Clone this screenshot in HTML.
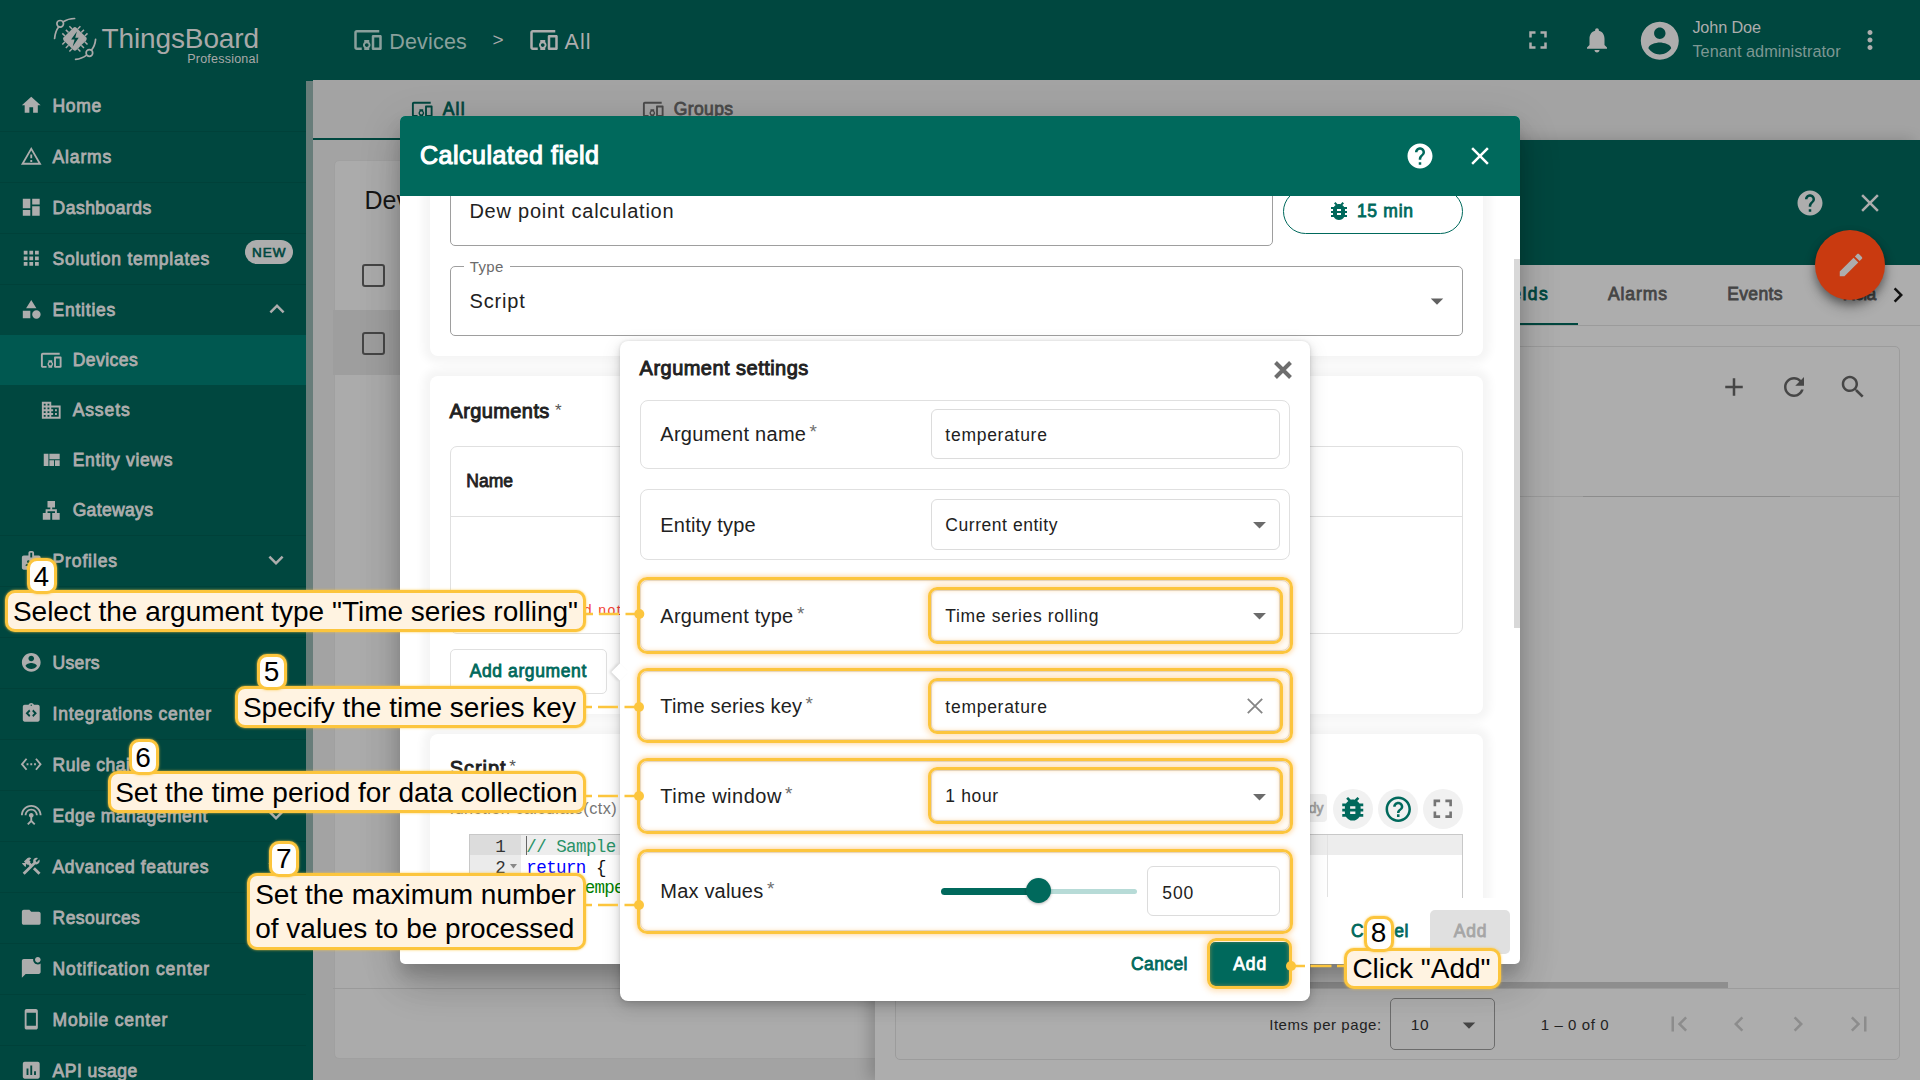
<!DOCTYPE html>
<html><head><meta charset="utf-8"><title>ThingsBoard</title><style>
html,body{margin:0;padding:0}
body{width:1920px;height:1080px;overflow:hidden;position:relative;background:#a3a3a3;font-family:"Liberation Sans",sans-serif}
div,span,svg{position:absolute;box-sizing:border-box}
span{white-space:pre}
</style></head><body>
<div style="left:0px;top:0px;width:1920px;height:80px;background:#00473f"></div>
<svg style="left:52px;top:14px" width="48" height="50" viewBox="0 0 48 50"><g fill="none" stroke="#a9a9a9" stroke-width="1.7" stroke-linecap="round">
<path d="M2.6 24.5 C3 19.5 4.6 15.5 6.6 12.9"/><path d="M11.2 7.7 C14.5 5.6 18.5 4.6 22.6 4.5"/><circle cx="8.2" cy="9.8" r="3.3"/>
<path d="M43.6 25.4 C43.2 30 41.6 33.600 39.400 36.200"/><path d="M34.600 41.200 C31.500 43.600 27.500 45.200 23.600 45.400"/><circle cx="37.4" cy="39" r="3.3"/>
</g><g transform="translate(22.9 24.900) rotate(45)"><rect x="-9" y="-9" width="18" height="18" rx="2.2" fill="#a9a9a9"/>
<g stroke="#a9a9a9" stroke-width="1.5" stroke-linecap="butt"><path d="M-5 -9v-3.800M0 -9v-3.800M5 -9v-3.800M-5 9v3.800M0 9v3.800M5 9v3.800M-9 -5h-3.800M-9 0h-3.800M-9 5h-3.800M9 -5h3.800M9 0h3.800M9 5h3.800"/></g>
<path d="M2 -7.500 L-3.800 0.700 L-0.300 0.700 L-2.200 7.500 L3.800 -1.100 L0.300 -1.100 Z" fill="#00473f" transform="rotate(-45)"/></g></svg>
<span style="left:101.44px;top:24.6px;font-size:28px;line-height:28px;color:#a9a9a9;letter-spacing:-0.11px;">ThingsBoard</span>
<span style="left:187.25px;top:52.8px;font-size:12.5px;line-height:12.5px;color:#a9a9a9;letter-spacing:0.22px;">Professional</span>
<svg style="left:352.5px;top:25.0px;" width="30" height="30" viewBox="0 0 24 24"><path fill="#8aa09c" d="M3 6h18V4H3c-1.1 0-2 .9-2 2v12c0 1.1.9 2 2 2h4v-2H3V6zm10 6H9v1.78c-.61.55-1 1.33-1 2.22s.39 1.67 1 2.22V20h4v-1.78c.61-.55 1-1.34 1-2.22s-.39-1.67-1-2.22V12zm-2 5.5c-.83 0-1.5-.67-1.5-1.5s.67-1.5 1.5-1.5 1.5.67 1.5 1.5-.67 1.5-1.5 1.5zM22 8h-6c-.5 0-1 .5-1 1v10c0 .5.5 1 1 1h6c.5 0 1-.5 1-1V9c0-.5-.5-1-1-1zm-1 10h-4v-8h4v8z"/></svg>
<span style="left:389.17px;top:32.4px;font-size:21.5px;line-height:21.5px;color:#8aa09c;letter-spacing:0.20px;">Devices</span>
<span style="left:492.62px;top:30.2px;font-size:19px;line-height:19px;color:#a9a9a9;">&gt;</span>
<svg style="left:529.0px;top:25.0px;" width="30" height="30" viewBox="0 0 24 24"><path fill="#adadad" d="M3 6h18V4H3c-1.1 0-2 .9-2 2v12c0 1.1.9 2 2 2h4v-2H3V6zm10 6H9v1.78c-.61.55-1 1.33-1 2.22s.39 1.67 1 2.22V20h4v-1.78c.61-.55 1-1.34 1-2.22s-.39-1.67-1-2.22V12zm-2 5.5c-.83 0-1.5-.67-1.5-1.5s.67-1.5 1.5-1.5 1.5.67 1.5 1.5-.67 1.5-1.5 1.5zM22 8h-6c-.5 0-1 .5-1 1v10c0 .5.5 1 1 1h6c.5 0 1-.5 1-1V9c0-.5-.5-1-1-1zm-1 10h-4v-8h4v8z"/></svg>
<span style="left:564.57px;top:32.4px;font-size:21.5px;line-height:21.5px;color:#adadad;letter-spacing:1.04px;">All</span>
<svg style="left:1522.5px;top:25.0px;" width="30" height="30" viewBox="0 0 24 24"><path fill="#adadad" d="M7 14H5v5h5v-2H7v-3zm-2-4h2V7h3V5H5v5zm12 7h-3v2h5v-5h-2v3zM14 5v2h3v3h2V5h-5z"/></svg>
<svg style="left:1582.0px;top:25.0px;" width="30" height="30" viewBox="0 0 24 24"><path fill="#adadad" d="M12 22c1.100 0 2-.9 2-2h-4c0 1.100.89 2 2 2zm6-6v-5c0-3.070-1.640-5.640-4.500-6.320V4c0-.83-.67-1.500-1.500-1.500s-1.500.67-1.500 1.500v.68C7.630 5.360 6 7.920 6 11v5l-2 2v1h16v-1l-2-2z"/></svg>
<svg style="left:1637.2px;top:17.7px;" width="45.6" height="45.6" viewBox="0 0 24 24"><path fill="#adadad" d="M12 2C6.48 2 2 6.48 2 12s4.48 10 10 10 10-4.48 10-10S17.52 2 12 2zm0 3c1.66 0 3 1.34 3 3s-1.34 3-3 3-3-1.34-3-3 1.34-3 3-3zm0 14.2c-2.5 0-4.71-1.28-6-3.22.03-1.99 4-3.08 6-3.08 1.99 0 5.97 1.09 6 3.08-1.29 1.94-3.5 3.22-6 3.22z"/></svg>
<span style="left:1692.375px;top:18.7px;font-size:16.25px;line-height:16.25px;color:#adadad;letter-spacing:-0.14px;">John Doe</span>
<span style="left:1692.375px;top:43.1px;font-size:16.25px;line-height:16.25px;color:#7d9793;letter-spacing:0.05px;">Tenant administrator</span>
<svg style="left:1855.0px;top:25.0px;" width="30" height="30" viewBox="0 0 24 24"><path fill="#adadad" d="M12 8c1.100 0 2-.9 2-2s-.9-2-2-2-2 .9-2 2 .9 2 2 2zm0 2c-1.100 0-2 .9-2 2s.9 2 2 2 2-.9 2-2-.9-2-2-2zm0 6c-1.100 0-2 .9-2 2s.9 2 2 2 2-.9 2-2-.9-2-2-2z"/></svg>
<div style="left:0px;top:80px;width:313px;height:1000px;background:#00473f"></div>
<div style="left:306px;top:81px;width:7px;height:825px;background:#687d7a"></div>
<div style="left:0px;top:335px;width:306px;height:50px;background:#005850"></div>
<div style="left:0px;top:131px;width:306px;height:1px;background:#004139"></div>
<div style="left:0px;top:182px;width:306px;height:1px;background:#004139"></div>
<div style="left:0px;top:233px;width:306px;height:1px;background:#004139"></div>
<div style="left:0px;top:284px;width:306px;height:1px;background:#004139"></div>
<div style="left:0px;top:535px;width:306px;height:1px;background:#004139"></div>
<div style="left:0px;top:586px;width:306px;height:1px;background:#004139"></div>
<div style="left:0px;top:637px;width:306px;height:1px;background:#004139"></div>
<div style="left:0px;top:688px;width:306px;height:1px;background:#004139"></div>
<div style="left:0px;top:739px;width:306px;height:1px;background:#004139"></div>
<div style="left:0px;top:790px;width:306px;height:1px;background:#004139"></div>
<div style="left:0px;top:841px;width:306px;height:1px;background:#004139"></div>
<div style="left:0px;top:892px;width:306px;height:1px;background:#004139"></div>
<div style="left:0px;top:943px;width:306px;height:1px;background:#004139"></div>
<div style="left:0px;top:994px;width:306px;height:1px;background:#004139"></div>
<div style="left:0px;top:1045px;width:306px;height:1px;background:#004139"></div>
<svg style="left:20.25px;top:94.25px;" width="22.5" height="22.5" viewBox="0 0 24 24"><path fill="#adadad" d="M10 20v-6h4v6h5v-8h3L12 3 2 12h3v8z"/></svg>
<span style="left:52.55px;top:97.5px;font-size:17.5px;line-height:17.5px;color:#adadad;-webkit-text-stroke:0.80px #adadad;letter-spacing:0.69px;">Home</span>
<svg style="left:20.25px;top:145.35px;" width="22.5" height="22.5" viewBox="0 0 24 24"><path fill="#adadad" d="M12 5.99L19.53 19H4.47L12 5.99M12 2L1 21h22L12 2zm1 14h-2v2h2v-2zm0-6h-2v4h2v-4z"/></svg>
<span style="left:52.55px;top:149.0px;font-size:17.5px;line-height:17.5px;color:#adadad;-webkit-text-stroke:0.80px #adadad;letter-spacing:0.86px;">Alarms</span>
<svg style="left:20.25px;top:195.95000000000002px;" width="22.5" height="22.5" viewBox="0 0 24 24"><path fill="#adadad" d="M3 13h8V3H3v10zm0 8h8v-6H3v6zm10 0h8V11h-8v10zm0-18v6h8V3h-8z"/></svg>
<span style="left:52.55px;top:199.6px;font-size:17.5px;line-height:17.5px;color:#adadad;-webkit-text-stroke:0.80px #adadad;letter-spacing:0.49px;">Dashboards</span>
<svg style="left:20.25px;top:246.95px;" width="22.5" height="22.5" viewBox="0 0 24 24"><path fill="#adadad" d="M4 8h4V4H4v4zm6 12h4v-4h-4v4zm-6 0h4v-4H4v4zm0-6h4v-4H4v4zm6 0h4v-4h-4v4zm6-10v4h4V4h-4zm-6 4h4V4h-4v4zm6 6h4v-4h-4v4zm0 6h4v-4h-4v4z"/></svg>
<span style="left:52.55px;top:250.6px;font-size:17.5px;line-height:17.5px;color:#adadad;-webkit-text-stroke:0.80px #adadad;letter-spacing:0.75px;">Solution templates</span>
<svg style="left:20.25px;top:297.95px;" width="22.5" height="22.5" viewBox="0 0 24 24"><path fill="#adadad" d="M12 2l-5.5 9h11zM17.5 13a4.5 4.5 0 1 0 0 9a4.5 4.5 0 1 0 0 -9zM3 13.5h8v8H3z"/></svg>
<span style="left:52.55px;top:301.6px;font-size:17.5px;line-height:17.5px;color:#adadad;-webkit-text-stroke:0.80px #adadad;letter-spacing:0.77px;">Entities</span>
<svg style="left:20.25px;top:549.4000000000001px;" width="22.5" height="22.5" viewBox="0 0 24 24"><path fill="#adadad" d="M20 7h-5V4c0-1.1-.9-2-2-2h-2c-1.1 0-2 .9-2 2v3H4c-1.1 0-2 .9-2 2v11c0 1.1.9 2 2 2h16c1.1 0 2-.9 2-2V9c0-1.1-.9-2-2-2zM9 12c.83 0 1.5.67 1.5 1.5S9.83 15 9 15s-1.5-.67-1.5-1.5S8.17 12 9 12zm3 6H6v-.75c0-1 2-1.5 3-1.5s3 .5 3 1.5V18zm1-9h-2V4h2v5zm5 7.5h-4V15h4v1.5zm0-3h-4V12h4v1.5z"/></svg>
<span style="left:52.55px;top:553.1px;font-size:17.5px;line-height:17.5px;color:#adadad;-webkit-text-stroke:0.80px #adadad;letter-spacing:0.87px;">Profiles</span>
<svg style="left:20.25px;top:600.2px;" width="22.5" height="22.5" viewBox="0 0 24 24"><path fill="#adadad" d="M12 2C6.48 2 2 6.48 2 12s4.48 10 10 10 10-4.48 10-10S17.52 2 12 2zm0 3c1.66 0 3 1.34 3 3s-1.34 3-3 3-3-1.34-3-3 1.34-3 3-3zm0 14.2c-2.5 0-4.71-1.28-6-3.22.03-1.99 4-3.08 6-3.08 1.99 0 5.97 1.09 6 3.08-1.29 1.94-3.5 3.22-6 3.22z"/></svg>
<span style="left:52.55px;top:603.9px;font-size:17.5px;line-height:17.5px;color:#adadad;-webkit-text-stroke:0.80px #adadad;letter-spacing:0.31px;">Customers</span>
<svg style="left:20.25px;top:651.4000000000001px;" width="22.5" height="22.5" viewBox="0 0 24 24"><path fill="#adadad" d="M12 2C6.48 2 2 6.48 2 12s4.48 10 10 10 10-4.48 10-10S17.52 2 12 2zm0 3c1.66 0 3 1.34 3 3s-1.34 3-3 3-3-1.34-3-3 1.34-3 3-3zm0 14.2c-2.5 0-4.71-1.28-6-3.22.03-1.99 4-3.08 6-3.08 1.99 0 5.97 1.09 6 3.08-1.29 1.94-3.5 3.22-6 3.22z"/></svg>
<span style="left:52.55px;top:655.1px;font-size:17.5px;line-height:17.5px;color:#adadad;-webkit-text-stroke:0.80px #adadad;letter-spacing:0.34px;">Users</span>
<svg style="left:20.25px;top:702.0px;" width="22.5" height="22.5" viewBox="0 0 24 24"><path fill="#adadad" d="M19 3h-4.18C14.4 1.84 13.3 1 12 1s-2.400.84-2.820 2H5c-1.100 0-2 .9-2 2v14c0 1.100.9 2 2 2h14c1.100 0 2-.9 2-2V5c0-1.100-.9-2-2-2zm-8 11.170L9.830 16 6 12l3.830-4L11 9.830 8.830 12 11 14.170zM12 4.250c-.41 0-.75-.34-.75-.75s.34-.75.75-.75.75.34.75.75-.34.75-.75.75zM14.170 16L13 14.170 15.170 12 13 9.830 14.170 8 18 12l-3.830 4z"/></svg>
<span style="left:52.55px;top:705.7px;font-size:17.5px;line-height:17.5px;color:#adadad;-webkit-text-stroke:0.80px #adadad;letter-spacing:0.75px;">Integrations center</span>
<svg style="left:20.25px;top:753.1px;" width="22.5" height="22.5" viewBox="0 0 24 24"><path fill="#adadad" d="M7.77 6.76L6.23 5.48.82 12l5.41 6.52 1.54-1.28L3.42 12l4.35-5.24zM7 13h2v-2H7v2zm10-2h-2v2h2v-2zm-6 2h2v-2h-2v2zm6.77-7.52l-1.54 1.28L20.58 12l-4.35 5.24 1.54 1.28L23.18 12l-5.41-6.52z"/></svg>
<span style="left:52.55px;top:756.8px;font-size:17.5px;line-height:17.5px;color:#adadad;-webkit-text-stroke:0.80px #adadad;letter-spacing:0.56px;">Rule chains</span>
<svg style="left:20.25px;top:804.3000000000001px;" width="22.5" height="22.5" viewBox="0 0 24 24"><path fill="#adadad" d="M12 5c-3.87 0-7 3.13-7 7h2c0-2.76 2.24-5 5-5s5 2.24 5 5h2c0-3.87-3.13-7-7-7zm1 9.29c.88-.39 1.5-1.26 1.5-2.29 0-1.38-1.12-2.5-2.5-2.5S9.5 10.620 9.500 12c0 1.020.62 1.900 1.500 2.290v3.300L7.590 21 9 22.410l3-3 3 3L16.410 21 13 17.590v-3.300zM12 1C5.930 1 1 5.930 1 12h2c0-4.970 4.030-9 9-9s9 4.030 9 9h2c0-6.070-4.930-11-11-11z"/></svg>
<span style="left:52.55px;top:808.0px;font-size:17.5px;line-height:17.5px;color:#adadad;-webkit-text-stroke:0.80px #adadad;letter-spacing:0.49px;">Edge management</span>
<svg style="left:20.25px;top:855.0px;" width="22.5" height="22.5" viewBox="0 0 24 24"><path fill="#adadad" d="M13.783 15.172l2.121-2.121 5.996 5.996-2.121 2.121zM17.5 10c1.930 0 3.500-1.570 3.500-3.500 0-.58-.16-1.120-.41-1.600l-2.700 2.700-1.490-1.490 2.700-2.700c-.48-.25-1.020-.41-1.600-.41C15.570 3 14 4.570 14 6.500c0 .41.08.8.21 1.160l-1.850 1.850-1.780-1.780.71-.71-1.410-1.410L12 3.490c-1.170-1.170-3.070-1.170-4.240 0L4.220 7.030l1.410 1.410H2.810l-.71.71 3.540 3.540.71-.71V9.150l1.410 1.410.71-.71 1.780 1.780-7.410 7.410 2.120 2.120L16.340 9.790c.36.13.75.21 1.160.21z"/></svg>
<span style="left:52.55px;top:858.7px;font-size:17.5px;line-height:17.5px;color:#adadad;-webkit-text-stroke:0.80px #adadad;letter-spacing:0.62px;">Advanced features</span>
<svg style="left:20.25px;top:906.1px;" width="22.5" height="22.5" viewBox="0 0 24 24"><path fill="#adadad" d="M10 4H4c-1.100 0-1.990.9-1.990 2L2 18c0 1.100.9 2 2 2h16c1.100 0 2-.9 2-2V8c0-1.100-.9-2-2-2h-8l-2-2z"/></svg>
<span style="left:52.55px;top:909.8px;font-size:17.5px;line-height:17.5px;color:#adadad;-webkit-text-stroke:0.80px #adadad;letter-spacing:0.46px;">Resources</span>
<svg style="left:20.25px;top:957.2px;" width="22.5" height="22.5" viewBox="0 0 24 24"><path fill="#adadad" d="M22 6.980V16c0 1.100-.9 2-2 2H6l-4 4V4c0-1.100.9-2 2-2h10.100c-.06.32-.1.66-.1 1 0 2.760 2.240 5 5 5 1.130 0 2.160-.39 3-1.020zM16 3c0 1.660 1.340 3 3 3s3-1.340 3-3-1.340-3-3-3-3 1.340-3 3z"/></svg>
<span style="left:52.55px;top:960.9px;font-size:17.5px;line-height:17.5px;color:#adadad;-webkit-text-stroke:0.80px #adadad;letter-spacing:0.92px;">Notification center</span>
<svg style="left:20.25px;top:1008.3000000000001px;" width="22.5" height="22.5" viewBox="0 0 24 24"><path fill="#adadad" d="M17 1.010L7 1c-1.100 0-2 .9-2 2v18c0 1.100.9 2 2 2h10c1.100 0 2-.9 2-2V3c0-1.100-.9-1.990-2-1.990zM17 19H7V5h10v14z"/></svg>
<span style="left:52.55px;top:1012.0px;font-size:17.5px;line-height:17.5px;color:#adadad;-webkit-text-stroke:0.80px #adadad;letter-spacing:0.81px;">Mobile center</span>
<svg style="left:20.25px;top:1059.4px;" width="22.5" height="22.5" viewBox="0 0 24 24"><path fill="#adadad" d="M19 3H5c-1.100 0-2 .9-2 2v14c0 1.100.9 2 2 2h14c1.100 0 2-.9 2-2V5c0-1.100-.9-2-2-2zM9 17H7v-7h2v7zm4 0h-2V7h2v10zm4 0h-2v-4h2v4z"/></svg>
<span style="left:52.55px;top:1063.1px;font-size:17.5px;line-height:17.5px;color:#adadad;-webkit-text-stroke:0.80px #adadad;letter-spacing:0.50px;">API usage</span>
<svg style="left:40.05px;top:348.75px;" width="22.5" height="22.5" viewBox="0 0 24 24"><path fill="#adadad" d="M3 6h18V4H3c-1.1 0-2 .9-2 2v12c0 1.1.9 2 2 2h4v-2H3V6zm10 6H9v1.78c-.61.55-1 1.33-1 2.22s.39 1.67 1 2.22V20h4v-1.78c.61-.55 1-1.34 1-2.22s-.39-1.67-1-2.22V12zm-2 5.5c-.83 0-1.5-.67-1.5-1.5s.67-1.5 1.5-1.5 1.5.67 1.5 1.5-.67 1.5-1.5 1.5zM22 8h-6c-.5 0-1 .5-1 1v10c0 .5.5 1 1 1h6c.5 0 1-.5 1-1V9c0-.5-.5-1-1-1zm-1 10h-4v-8h4v8z"/></svg>
<span style="left:72.65px;top:351.5px;font-size:17.5px;line-height:17.5px;color:#adadad;-webkit-text-stroke:0.80px #adadad;letter-spacing:0.47px;">Devices</span>
<svg style="left:40.05px;top:398.75px;" width="22.5" height="22.5" viewBox="0 0 24 24"><path fill="#adadad" d="M12 7V3H2v18h20V7H12zM6 19H4v-2h2v2zm0-4H4v-2h2v2zm0-4H4V9h2v2zm0-4H4V5h2v2zm4 12H8v-2h2v2zm0-4H8v-2h2v2zm0-4H8V9h2v2zm0-4H8V5h2v2zm10 12h-8v-2h2v-2h-2v-2h2v-2h-2V9h8v10zm-2-8h-2v2h2v-2zm0 4h-2v2h2v-2z"/></svg>
<span style="left:72.65px;top:401.5px;font-size:17.5px;line-height:17.5px;color:#adadad;-webkit-text-stroke:0.80px #adadad;letter-spacing:0.90px;">Assets</span>
<svg style="left:40.05px;top:448.75px;" width="22.5" height="22.5" viewBox="0 0 24 24"><path fill="#adadad" d="M10 18h5v-6h-5v6zm-6 0h5V5H4v13zm12 0h5v-6h-5v6zM10 5v6h11V5H10z"/></svg>
<span style="left:72.65px;top:451.5px;font-size:17.5px;line-height:17.5px;color:#adadad;-webkit-text-stroke:0.80px #adadad;letter-spacing:0.67px;">Entity views</span>
<svg style="left:40.05px;top:498.75px;" width="22.5" height="22.5" viewBox="0 0 24 24"><path fill="#adadad" d="M13 22h8v-7h-3v-4h-5V9h3V2H8v7h3v2H6v4H3v7h8v-7H8v-2h8v2h-3z"/></svg>
<span style="left:72.65px;top:501.5px;font-size:17.5px;line-height:17.5px;color:#adadad;-webkit-text-stroke:0.80px #adadad;letter-spacing:0.36px;">Gateways</span>
<div style="left:245px;top:240px;width:48.3px;height:24.3px;background:#adadad;border-radius:12.2px"></div>
<span style="left:252.03px;top:245.7px;font-size:13.5px;line-height:13.5px;color:#00473f;-webkit-text-stroke:0.62px #00473f;letter-spacing:1.01px;">NEW</span>
<svg style="left:262.0px;top:294.0px;" width="30" height="30" viewBox="0 0 24 24"><path fill="#adadad" d="M12 8l-6 6 1.410 1.410L12 10.830l4.590 4.580L18 14z"/></svg>
<svg style="left:261.0px;top:545.0px;" width="30" height="30" viewBox="0 0 24 24"><path fill="#adadad" d="M16.590 8.590L12 13.170 7.410 8.590 6 10l6 6 6-6z"/></svg>
<svg style="left:261.0px;top:800.0px;" width="30" height="30" viewBox="0 0 24 24"><path fill="#adadad" d="M16.590 8.590L12 13.170 7.410 8.590 6 10l6 6 6-6z"/></svg>
<svg style="left:261.0px;top:851.0px;" width="30" height="30" viewBox="0 0 24 24"><path fill="#adadad" d="M16.590 8.590L12 13.170 7.410 8.590 6 10l6 6 6-6z"/></svg>
<div style="left:313px;top:138px;width:562px;height:2px;background:#00473f"></div>
<svg style="left:410.75px;top:97.75px;" width="22.5" height="22.5" viewBox="0 0 24 24"><path fill="#00473f" d="M3 6h18V4H3c-1.1 0-2 .9-2 2v12c0 1.1.9 2 2 2h4v-2H3V6zm10 6H9v1.78c-.61.55-1 1.33-1 2.22s.39 1.67 1 2.22V20h4v-1.78c.61-.55 1-1.34 1-2.22s-.39-1.67-1-2.22V12zm-2 5.5c-.83 0-1.5-.67-1.5-1.5s.67-1.5 1.5-1.5 1.5.67 1.5 1.5-.67 1.5-1.5 1.5zM22 8h-6c-.5 0-1 .5-1 1v10c0 .5.5 1 1 1h6c.5 0 1-.5 1-1V9c0-.5-.5-1-1-1zm-1 10h-4v-8h4v8z"/></svg>
<span style="left:442.65px;top:100.7px;font-size:17.5px;line-height:17.5px;color:#00473f;-webkit-text-stroke:0.80px #00473f;letter-spacing:1.30px;">All</span>
<svg style="left:641.75px;top:97.75px;" width="22.5" height="22.5" viewBox="0 0 24 24"><path fill="#4a4a4a" d="M3 6h18V4H3c-1.1 0-2 .9-2 2v12c0 1.1.9 2 2 2h4v-2H3V6zm10 6H9v1.78c-.61.55-1 1.33-1 2.22s.39 1.67 1 2.22V20h4v-1.78c.61-.55 1-1.34 1-2.22s-.39-1.67-1-2.22V12zm-2 5.5c-.83 0-1.5-.67-1.5-1.5s.67-1.5 1.5-1.5 1.5.67 1.5 1.5-.67 1.5-1.5 1.5zM22 8h-6c-.5 0-1 .5-1 1v10c0 .5.5 1 1 1h6c.5 0 1-.5 1-1V9c0-.5-.5-1-1-1zm-1 10h-4v-8h4v8z"/></svg>
<span style="left:673.65px;top:100.7px;font-size:17.5px;line-height:17.5px;color:#4a4a4a;-webkit-text-stroke:0.80px #4a4a4a;letter-spacing:0.41px;">Groups</span>
<div style="left:333.5px;top:160px;width:560px;height:899px;background:#ababab;border-radius:5px;border:1px solid #a0a0a0"></div>
<div style="left:333px;top:310px;width:560px;height:65px;background:#9e9e9e"></div>
<div style="left:333px;top:988px;width:560px;height:1px;background:#9a9a9a"></div>
<span style="left:364.5px;top:188.1px;font-size:25px;line-height:25px;color:#161616;">Devices</span>
<div style="left:362px;top:264px;width:23px;height:23px;border:2.5px solid #454545;border-radius:3px"></div>
<div style="left:362px;top:331.5px;width:23px;height:23px;border:2.5px solid #454545;border-radius:3px"></div>
<div style="left:875px;top:140px;width:1045px;height:940px;background:#adadad;box-shadow:-6px 0 14px rgba(0,0,0,.18)"></div>
<div style="left:875px;top:140px;width:1045px;height:125px;background:#00473f"></div>
<svg style="left:1795.0px;top:188.0px;" width="30" height="30" viewBox="0 0 24 24"><path fill="#adadad" d="M12 2C6.480 2 2 6.480 2 12s4.480 10 10 10 10-4.480 10-10S17.520 2 12 2zm1 17h-2v-2h2v2zm2.070-7.750l-.9.92C13.450 12.900 13 13.500 13 15h-2v-.5c0-1.100.45-2.100 1.170-2.830l1.240-1.260c.37-.36.59-.86.59-1.410 0-1.100-.9-2-2-2s-2 .9-2 2H8c0-2.210 1.790-4 4-4s4 1.790 4 4c0 .88-.36 1.680-.93 2.250z"/></svg>
<svg style="left:1855.0px;top:188.0px;" width="30" height="30" viewBox="0 0 24 24"><path fill="#adadad" d="M19 6.410L17.590 5 12 10.590 6.410 5 5 6.410 10.590 12 5 17.590 6.410 19 12 13.410 17.590 19 19 17.590 13.410 12z"/></svg>
<span style="left:1499.65px;top:285.7px;font-size:17.5px;line-height:17.5px;color:#00473f;-webkit-text-stroke:0.80px #00473f;letter-spacing:1.44px;">fields</span>
<span style="left:1607.95px;top:285.7px;font-size:17.5px;line-height:17.5px;color:#454545;-webkit-text-stroke:0.80px #454545;letter-spacing:0.92px;">Alarms</span>
<span style="left:1727.15px;top:285.7px;font-size:17.5px;line-height:17.5px;color:#454545;-webkit-text-stroke:0.80px #454545;letter-spacing:0.37px;">Events</span>
<span style="left:1842.65px;top:285.7px;font-size:17.5px;line-height:17.5px;color:#454545;-webkit-text-stroke:0.80px #454545;letter-spacing:-0.82px;">Rela</span>
<div style="left:875px;top:324.5px;width:1045px;height:1px;background:#9b9b9b"></div>
<div style="left:1400px;top:322.6px;width:178px;height:2.4px;background:#00473f"></div>
<svg style="left:1882.5px;top:280.0px;" width="30" height="30" viewBox="0 0 24 24"><path fill="#111" d="M10 6L8.590 7.410 13.170 12l-4.580 4.590L10 18l6-6z"/></svg>
<div style="left:895px;top:346px;width:1005px;height:713.5px;border:1px solid #9c9c9c;border-radius:5px"></div>
<svg style="left:1719.0px;top:372.0px;" width="30" height="30" viewBox="0 0 24 24"><path fill="#464646" d="M19 13h-6v6h-2v-6H5v-2h6V5h2v6h6v2z"/></svg>
<svg style="left:1779.0px;top:372.0px;" width="30" height="30" viewBox="0 0 24 24"><path fill="#464646" d="M17.650 6.350C16.200 4.900 14.210 4 12 4c-4.420 0-7.990 3.580-7.990 8s3.570 8 7.990 8c3.730 0 6.840-2.550 7.730-6h-2.080c-.82 2.330-3.040 4-5.650 4-3.310 0-6-2.690-6-6s2.690-6 6-6c1.660 0 3.140.69 4.220 1.780L13 11h7V4l-2.350 2.350z"/></svg>
<svg style="left:1838.0px;top:372.0px;" width="30" height="30" viewBox="0 0 24 24"><path fill="#464646" d="M15.500 14h-.79l-.28-.27C15.410 12.590 16 11.110 16 9.500 16 5.910 13.090 3 9.500 3S3 5.910 3 9.500 5.910 16 9.500 16c1.610 0 3.090-.59 4.230-1.570l.27.28v.79l5 4.990L20.490 19l-4.990-5zm-6 0C7.010 14 5 11.990 5 9.500S7.010 5 9.500 5 14 7.010 14 9.500 11.990 14 9.500 14z"/></svg>
<div style="left:896px;top:496px;width:1003px;height:1px;background:#9c9c9c"></div>
<div style="left:1583px;top:496px;width:207px;height:1px;background:#8c8c8c"></div>
<div style="left:896px;top:982px;width:832px;height:6px;background:#8e8e8e"></div>
<div style="left:896px;top:988px;width:1003px;height:1px;background:#9c9c9c"></div>
<span style="left:1269.2px;top:1017.1px;font-size:15px;line-height:15px;color:#222;letter-spacing:0.55px;">Items per page:</span>
<div style="left:1390px;top:998px;width:105px;height:51.5px;border:1px solid #6c6c6c;border-radius:5px"></div>
<span style="left:1410.69px;top:1016.8px;font-size:15.5px;line-height:15.5px;color:#222;letter-spacing:0.68px;">10</span>
<svg style="left:1454.0px;top:1009.5px;" width="30" height="30" viewBox="0 0 24 24"><path fill="#444" d="M7 10l5 5 5-5z"/></svg>
<span style="left:1540.7px;top:1017.1px;font-size:15px;line-height:15px;color:#222;letter-spacing:0.59px;">1 – 0 of 0</span>
<svg style="left:1664.4px;top:1009.0px;" width="30" height="30" viewBox="0 0 24 24"><path fill="#8c8c8c" d="M18.410 16.590L13.820 12l4.590-4.590L17 6l-6 6 6 6zM6 6h2v12H6z"/></svg>
<svg style="left:1723.5px;top:1009.0px;" width="30" height="30" viewBox="0 0 24 24"><path fill="#8c8c8c" d="M15.410 7.410L14 6l-6 6 6 6 1.410-1.410L10.830 12z"/></svg>
<svg style="left:1783.0px;top:1009.0px;" width="30" height="30" viewBox="0 0 24 24"><path fill="#8c8c8c" d="M10 6L8.590 7.410 13.170 12l-4.580 4.590L10 18l6-6z"/></svg>
<svg style="left:1843.8px;top:1009.0px;" width="30" height="30" viewBox="0 0 24 24"><path fill="#8c8c8c" d="M5.590 7.410L10.180 12l-4.590 4.590L7 18l6-6-6-6zM16 6h2v12h-2z"/></svg>
<div style="left:1815px;top:230px;width:70px;height:70px;background:#c93a10;border-radius:50%;box-shadow:0 4px 8px rgba(0,0,0,.35),0 8px 14px rgba(0,0,0,.2)"></div>
<svg style="left:1835.5px;top:250.0px;" width="30" height="30" viewBox="0 0 24 24"><path fill="#adadad" d="M3 17.250V21h3.750L17.810 9.940l-3.750-3.750L3 17.250zM20.710 7.040c.39-.39.39-1.020 0-1.410l-2.340-2.340c-.39-.39-1.020-.39-1.410 0l-1.830 1.830 3.750 3.750 1.830-1.830z"/></svg>
<div style="left:400px;top:116px;width:1120px;height:848px;background:#fff;border-radius:5px;box-shadow:0 11px 15px rgba(0,0,0,.13),0 24px 38px rgba(0,0,0,.12),0 9px 46px rgba(0,0,0,.12)"></div>
<div style="left:400px;top:116px;width:1120px;height:80px;background:#00695c;border-radius:5px 5px 0 0"></div>
<span style="left:419.9px;top:142.8px;font-size:25px;line-height:25px;color:#fff;-webkit-text-stroke:1.15px #fff;letter-spacing:0.54px;">Calculated field</span>
<svg style="left:1405.0px;top:141.0px;" width="30" height="30" viewBox="0 0 24 24"><path fill="#fff" d="M12 2C6.480 2 2 6.480 2 12s4.480 10 10 10 10-4.480 10-10S17.520 2 12 2zm1 17h-2v-2h2v2zm2.070-7.750l-.9.92C13.450 12.900 13 13.500 13 15h-2v-.5c0-1.100.45-2.100 1.170-2.830l1.240-1.260c.37-.36.59-.86.59-1.410 0-1.100-.9-2-2-2s-2 .9-2 2H8c0-2.210 1.790-4 4-4s4 1.790 4 4c0 .88-.36 1.680-.93 2.250z"/></svg>
<svg style="left:1465.0px;top:141.0px;" width="30" height="30" viewBox="0 0 24 24"><path fill="#fff" d="M19 6.410L17.590 5 12 10.590 6.410 5 5 6.410 10.590 12 5 17.590 6.410 19 12 13.410 17.590 19 19 17.590 13.410 12z"/></svg>
<div style="left:400px;top:196px;width:1120px;height:702px;overflow:hidden"><div style="left:0px;top:0px;width:1120px;height:702px;background:#fff"></div>
<div style="left:1113.5px;top:63px;width:6.5px;height:369px;background:#d8d8d8"></div>
<div style="left:30px;top:-60px;width:1053px;height:220px;background:#fff;border-radius:8px;box-shadow:0 0 9px 7px rgba(0,0,0,.042)"></div>
<div style="left:30px;top:180px;width:1053px;height:338px;background:#fff;border-radius:8px;box-shadow:0 0 9px 7px rgba(0,0,0,.042)"></div>
<div style="left:30px;top:538px;width:1053px;height:400px;background:#fff;border-radius:8px;box-shadow:0 0 9px 7px rgba(0,0,0,.042)"></div>
<div style="left:50px;top:-20px;width:823px;height:70px;border:1px solid #9e9e9e;border-radius:5px"></div>
<span style="left:69.4px;top:4.7px;font-size:20px;line-height:20px;color:#212121;letter-spacing:0.76px;">Dew point calculation</span>
<div style="left:883px;top:-7.3px;width:180px;height:45px;border:1.3px solid #00695c;border-radius:22.5px"></div>
<svg style="left:927.0px;top:3.0px;" width="24" height="24" viewBox="0 0 24 24"><path fill="#00695c" d="M20 8h-2.810c-.45-.78-1.070-1.450-1.820-1.960L17 4.410 15.590 3l-2.170 2.170C12.960 5.060 12.490 5 12 5c-.49 0-.96.06-1.410.17L8.410 3 7 4.410l1.620 1.630C7.880 6.550 7.260 7.220 6.810 8H4v2h2.090c-.05.33-.09.66-.09 1v1H4v2h2v1c0 .34.04.67.09 1H4v2h2.810c1.040 1.790 2.970 3 5.190 3s4.150-1.210 5.190-3H20v-2h-2.090c.05-.33.09-.66.09-1v-1h2v-2h-2v-1c0-.34-.04-.67-.09-1H20V8zm-6 8h-4v-2h4v2zm0-4h-4v-2h4v2z"/></svg>
<span style="left:956.9499999999999px;top:6.5px;font-size:17.5px;line-height:17.5px;color:#00695c;-webkit-text-stroke:0.80px #00695c;letter-spacing:0.70px;">15 min</span>
<div style="left:50px;top:70.3px;width:1013px;height:69.5px;border:1px solid #9e9e9e;border-radius:5px"></div>
<div style="left:64px;top:68px;width:46px;height:6px;background:#fff"></div>
<span style="left:69.7px;top:62.5px;font-size:15px;line-height:15px;color:#6b6b6b;letter-spacing:0.39px;">Type</span>
<span style="left:69.6px;top:94.7px;font-size:20px;line-height:20px;color:#212121;letter-spacing:0.82px;">Script</span>
<svg style="left:1022.0px;top:89.69999999999999px;" width="30" height="30" viewBox="0 0 24 24"><path fill="#616161" d="M7 10l5 5 5-5z"/></svg>
<span style="left:49.49999999999998px;top:205.2px;font-size:20px;line-height:20px;color:#212121;-webkit-text-stroke:0.92px #212121;letter-spacing:0.39px;">Arguments</span>
<span style="left:155px;top:205.7px;font-size:17px;line-height:17px;color:#555;">*</span>
<div style="left:50px;top:250.3px;width:1013px;height:187.5px;border:1px solid #e0e0e0;border-radius:7px"></div>
<span style="left:66.35px;top:277.1px;font-size:17.5px;line-height:17.5px;color:#212121;-webkit-text-stroke:0.80px #212121;letter-spacing:-0.01px;">Name</span>
<div style="left:51px;top:320px;width:1011px;height:1px;background:#e0e0e0"></div>
<span style="left:183.72px;top:406.7px;font-size:14px;line-height:14px;color:#f44336;letter-spacing:1.42px;">d not</span>
<div style="left:50px;top:452.8px;width:156.7px;height:44.8px;border:1px solid #e0e0e0;border-radius:5px"></div>
<span style="left:69.65px;top:467.1px;font-size:17.5px;line-height:17.5px;color:#00695c;-webkit-text-stroke:0.80px #00695c;letter-spacing:0.61px;">Add argument</span>
<span style="left:49.79999999999999px;top:562.2px;font-size:20px;line-height:20px;color:#212121;-webkit-text-stroke:0.92px #212121;letter-spacing:0.92px;">Script</span>
<span style="left:109.30000000000001px;top:561.7px;font-size:17px;line-height:17px;color:#555;">*</span>
<span style="left:49.675px;top:604.1px;font-size:16.25px;line-height:16.25px;color:#757575;letter-spacing:0.45px;">function calculate(ctx)</span>
<div style="left:896px;top:598px;width:31px;height:28px;background:#f0f0f0;border-radius:4px"></div>
<span style="left:908.72px;top:605.2px;font-size:14px;line-height:14px;color:#9e9e9e;-webkit-text-stroke:0.64px #9e9e9e;letter-spacing:0.04px;">dy</span>
<div style="left:932.7px;top:593px;width:40px;height:40px;background:#f1f1f1;border-radius:50%"></div>
<div style="left:977.9000000000001px;top:593px;width:40px;height:40px;background:#f1f1f1;border-radius:50%"></div>
<div style="left:1023px;top:593px;width:40px;height:40px;background:#f1f1f1;border-radius:50%"></div>
<svg style="left:936.95px;top:596.75px;" width="31.5" height="31.5" viewBox="0 0 24 24"><path fill="#00695c" d="M20 8h-2.810c-.45-.78-1.070-1.450-1.820-1.960L17 4.410 15.590 3l-2.170 2.170C12.960 5.060 12.490 5 12 5c-.49 0-.96.06-1.410.17L8.410 3 7 4.410l1.620 1.630C7.880 6.550 7.260 7.220 6.810 8H4v2h2.090c-.05.33-.09.66-.09 1v1H4v2h2v1c0 .34.04.67.09 1H4v2h2.810c1.040 1.790 2.970 3 5.190 3s4.150-1.210 5.190-3H20v-2h-2.090c.05-.33.09-.66.09-1v-1h2v-2h-2v-1c0-.34-.04-.67-.09-1H20V8zm-6 8h-4v-2h4v2zm0-4h-4v-2h4v2z"/></svg>
<svg style="left:982.6500000000001px;top:597.75px;" width="30.5" height="30.5" viewBox="0 0 24 24"><path fill="#00695c" d="M11 18h2v-2h-2v2zm1-16C6.480 2 2 6.480 2 12s4.480 10 10 10 10-4.480 10-10S17.520 2 12 2zm0 18c-4.410 0-8-3.590-8-8s3.590-8 8-8 8 3.590 8 8-3.590 8-8 8zm0-14c-2.210 0-4 1.790-4 4h2c0-1.100.9-2 2-2s2 .9 2 2c0 2-3 1.750-3 5h2c0-2.250 3-2.500 3-5 0-2.210-1.790-4-4-4z"/></svg>
<svg style="left:1027.25px;top:597.25px;" width="31.5" height="31.5" viewBox="0 0 24 24"><path fill="#757575" d="M7 14H5v5h5v-2H7v-3zm-2-4h2V7h3V5H5v5zm12 7h-3v2h5v-5h-2v3zM14 5v2h3v3h2V5h-5z"/></svg>
<div style="left:69px;top:637.7px;width:994px;height:80px;border:1px solid #c8c8c8;background:#fff"></div>
<div style="left:70px;top:638.7px;width:50.7px;height:62px;background:#ebebeb"></div>
<div style="left:70px;top:638.7px;width:50.7px;height:20px;background:#dcdcdc"></div>
<div style="left:120.7px;top:638.7px;width:941.3px;height:20px;background:#ededed"></div>
<div style="left:926.5px;top:638.7px;width:1px;height:62px;background:#e3e3e3"></div>
<div style="left:126px;top:639.5px;width:1.2px;height:19px;background:#666"></div>
<span style="left:95.30000000000001px;top:642.6px;font-size:17.5px;line-height:17.5px;color:#333;font-family:'Liberation Mono', monospace;">1</span>
<span style="left:95.30000000000001px;top:663.6px;font-size:17.5px;line-height:17.5px;color:#333;font-family:'Liberation Mono', monospace;">2</span>
<svg style="left:110px;top:668px" width="7" height="5" viewBox="0 0 7 5"><path d="M0 0h7L3.5 4.5z" fill="#888"/></svg>
<span style="left:126.35000000000005px;top:643.2px;font-size:17.5px;line-height:17.5px;color:#2a9268;font-family:'Liberation Mono', monospace;letter-spacing:-0.57px;">// Sample</span>
<span style="left:126.35000000000005px;top:663.8px;font-size:17.5px;line-height:17.5px;color:#0000ff;font-family:'Liberation Mono', monospace;letter-spacing:-0.61px;">return</span>
<span style="left:196px;top:663.8px;font-size:17.5px;line-height:17.5px;color:#111;font-family:'Liberation Mono', monospace;">{</span>
<span style="left:165.15px;top:684.2px;font-size:17.5px;line-height:17.5px;color:#008000;font-family:'Liberation Mono', monospace;letter-spacing:-0.75px;">"temperature"</span></div>
<span style="left:1351.0500000000002px;top:923.0px;font-size:17.5px;line-height:17.5px;color:#00695c;-webkit-text-stroke:0.80px #00695c;letter-spacing:0.57px;">Cancel</span>
<div style="left:1430px;top:909.5px;width:80px;height:44px;background:#e0e0e0;border-radius:5px"></div>
<span style="left:1453.65px;top:923.0px;font-size:17.5px;line-height:17.5px;color:#a6a6a6;-webkit-text-stroke:0.80px #a6a6a6;letter-spacing:0.85px;">Add</span>
<div style="left:620px;top:340.5px;width:690px;height:660px;background:#fff;border-radius:8px;box-shadow:0 3px 8px rgba(0,0,0,.12),0 6px 20px rgba(0,0,0,.13),0 0 3px rgba(0,0,0,.1)"></div>
<div style="left:614.2px;top:665.6px;width:11.500px;height:11.500px;background:#fff;transform:rotate(45deg);box-shadow:-1.500px 1.500px 3px rgba(0,0,0,.13)"></div>
<span style="left:639.6px;top:357.9px;font-size:20px;line-height:20px;color:#212121;-webkit-text-stroke:0.92px #212121;letter-spacing:0.47px;">Argument settings</span>
<svg style="left:1271px;top:358px" width="24" height="24" viewBox="0 0 24 24"><path d="M4.5 4.5l15 15M19.500 4.500l-15 15" stroke="#6e6e6e" stroke-width="4" fill="none"/></svg>
<div style="left:640px;top:400.2px;width:649.7px;height:68.8px;border:1px solid #e0e0e0;border-radius:8px"></div>
<span style="left:660.3000000000001px;top:423.8px;font-size:20px;line-height:20px;color:#212121;letter-spacing:0.28px;">Argument name</span>
<span style="left:809.5px;top:422.0px;font-size:19px;line-height:19px;color:#707070;">*</span>
<div style="left:931px;top:409.2px;width:348.7px;height:49.5px;border:1px solid #dcdcdc;border-radius:6px"></div>
<span style="left:945.35px;top:427.1px;font-size:17.5px;line-height:17.5px;color:#212121;letter-spacing:0.72px;">temperature</span>
<div style="left:640px;top:489.4px;width:649.7px;height:70.3px;border:1px solid #e0e0e0;border-radius:8px"></div>
<span style="left:660.3000000000001px;top:514.9px;font-size:20px;line-height:20px;color:#212121;letter-spacing:0.20px;">Entity type</span>
<div style="left:931px;top:499.2px;width:348.7px;height:50.5px;border:1px solid #dcdcdc;border-radius:6px"></div>
<span style="left:945.35px;top:516.8px;font-size:17.5px;line-height:17.5px;color:#212121;letter-spacing:0.54px;">Current entity</span>
<svg style="left:1243.7px;top:509.0px;" width="31" height="31" viewBox="0 0 24 24"><path fill="#6b6b6b" d="M7 10l5 5 5-5z"/></svg>
<div style="left:639.8px;top:580px;width:649.9px;height:71px;border:1px solid #e0e0e0;border-radius:8px"></div>
<div style="left:636.8px;top:577px;width:655.9px;height:77px;border:3.3px solid #fcc53d;border-radius:10px;box-shadow:0 0 5px 1px rgba(255,176,66,.5),inset 0 0 4px rgba(255,176,66,.5)"></div>
<span style="left:660.3000000000001px;top:606.0px;font-size:20px;line-height:20px;color:#212121;letter-spacing:0.24px;">Argument type</span>
<span style="left:797.1px;top:604.2px;font-size:19px;line-height:19px;color:#707070;">*</span>
<div style="left:931px;top:590px;width:348.7px;height:51px;border:1px solid #dcdcdc;border-radius:6px"></div>
<div style="left:928px;top:587px;width:354.7px;height:57px;border:3.3px solid #fcc53d;border-radius:9px;box-shadow:0 0 6px 2px rgba(255,176,66,.42),inset 0 0 4px rgba(255,176,66,.5)"></div>
<span style="left:945.35px;top:608.3px;font-size:17.5px;line-height:17.5px;color:#212121;letter-spacing:0.65px;">Time series rolling</span>
<svg style="left:1243.7px;top:600.2px;" width="31" height="31" viewBox="0 0 24 24"><path fill="#6b6b6b" d="M7 10l5 5 5-5z"/></svg>
<div style="left:639.8px;top:671.2px;width:649.9px;height:69.2px;border:1px solid #e0e0e0;border-radius:8px"></div>
<div style="left:636.8px;top:668.2px;width:655.9px;height:75.2px;border:3.3px solid #fcc53d;border-radius:10px;box-shadow:0 0 5px 1px rgba(255,176,66,.5),inset 0 0 4px rgba(255,176,66,.5)"></div>
<span style="left:660.3000000000001px;top:695.9px;font-size:20px;line-height:20px;color:#212121;letter-spacing:0.18px;">Time series key</span>
<span style="left:805.5px;top:694.1px;font-size:19px;line-height:19px;color:#707070;">*</span>
<div style="left:931px;top:680.9px;width:348.7px;height:49.7px;border:1px solid #dcdcdc;border-radius:6px"></div>
<div style="left:928px;top:677.9px;width:354.7px;height:55.7px;border:3.3px solid #fcc53d;border-radius:9px;box-shadow:0 0 6px 2px rgba(255,176,66,.42),inset 0 0 4px rgba(255,176,66,.5)"></div>
<span style="left:945.35px;top:698.9px;font-size:17.5px;line-height:17.5px;color:#212121;letter-spacing:0.72px;">temperature</span>
<svg style="left:1242.7px;top:694.3px" width="24" height="24" viewBox="0 0 24 24"><path d="M4.8 4.8l14.4 14.400M19.200 4.800L4.800 19.200" stroke="#858585" stroke-width="1.8" fill="none"/></svg>
<div style="left:639.8px;top:761.4px;width:649.9px;height:70px;border:1px solid #e0e0e0;border-radius:8px"></div>
<div style="left:636.8px;top:758.4px;width:655.9px;height:76px;border:3.3px solid #fcc53d;border-radius:10px;box-shadow:0 0 5px 1px rgba(255,176,66,.5),inset 0 0 4px rgba(255,176,66,.5)"></div>
<span style="left:660.3000000000001px;top:785.5px;font-size:20px;line-height:20px;color:#212121;letter-spacing:0.52px;">Time window</span>
<span style="left:785.1px;top:783.7px;font-size:19px;line-height:19px;color:#707070;">*</span>
<div style="left:931px;top:770px;width:348.7px;height:51.3px;border:1px solid #dcdcdc;border-radius:6px"></div>
<div style="left:928px;top:767px;width:354.7px;height:57.3px;border:3.3px solid #fcc53d;border-radius:9px;box-shadow:0 0 6px 2px rgba(255,176,66,.42),inset 0 0 4px rgba(255,176,66,.5)"></div>
<span style="left:945.35px;top:787.8px;font-size:17.5px;line-height:17.5px;color:#212121;letter-spacing:0.64px;">1 hour</span>
<svg style="left:1243.7px;top:781.0px;" width="31" height="31" viewBox="0 0 24 24"><path fill="#6b6b6b" d="M7 10l5 5 5-5z"/></svg>
<div style="left:639.8px;top:852.1px;width:649.9px;height:78.8px;border:1px solid #e0e0e0;border-radius:8px"></div>
<div style="left:636.8px;top:849.1px;width:655.9px;height:84.8px;border:3.3px solid #fcc53d;border-radius:10px;box-shadow:0 0 5px 1px rgba(255,176,66,.5),inset 0 0 4px rgba(255,176,66,.5)"></div>
<span style="left:660.3000000000001px;top:880.7px;font-size:20px;line-height:20px;color:#212121;letter-spacing:0.19px;">Max values</span>
<span style="left:767.1px;top:878.9px;font-size:19px;line-height:19px;color:#707070;">*</span>
<div style="left:1030px;top:888.5px;width:107px;height:5px;background:#b7dbd7;border-radius:2.5px"></div>
<div style="left:940.6px;top:887.5px;width:98px;height:7px;background:#00695c;border-radius:3.5px"></div>
<div style="left:1026.1px;top:878.2px;width:25px;height:25px;background:#00695c;border-radius:50%;box-shadow:0 1px 3px rgba(0,0,0,.3)"></div>
<div style="left:1147px;top:866px;width:132.8px;height:50px;border:1px solid #dcdcdc;border-radius:6px"></div>
<span style="left:1162.3500000000001px;top:884.6px;font-size:17.5px;line-height:17.5px;color:#212121;letter-spacing:0.87px;">500</span>
<span style="left:1130.95px;top:955.7px;font-size:17.5px;line-height:17.5px;color:#00695c;-webkit-text-stroke:0.80px #00695c;letter-spacing:0.41px;">Cancel</span>
<div style="left:1210px;top:941.5px;width:79.5px;height:44px;background:#00695c;border-radius:5px"></div>
<div style="left:1207.1px;top:937.9px;width:85.4px;height:51.1px;border:3.3px solid #fcc53d;border-radius:9px;box-shadow:0 0 6px 2px rgba(255,176,66,.42),inset 0 0 4px rgba(255,176,66,.5)"></div>
<span style="left:1233.3500000000001px;top:955.7px;font-size:17.5px;line-height:17.5px;color:#fff;-webkit-text-stroke:0.80px #fff;letter-spacing:0.85px;">Add</span>
<svg style="left:585.7px;top:607.6px" width="59.299999999999955" height="12"><path d="M0 6H7M13 6H33M39.5 6H53.299999999999955" stroke="#fcc53d" stroke-width="2.6" fill="none"/><circle cx="53.299999999999955" cy="6" r="5" fill="#fcc53d"/></svg>
<svg style="left:585px;top:700.8px" width="60" height="12"><path d="M0 6H7M13 6H33M39.5 6H54" stroke="#fcc53d" stroke-width="2.6" fill="none"/><circle cx="54" cy="6" r="5" fill="#fcc53d"/></svg>
<svg style="left:585px;top:790px" width="60" height="12"><path d="M0 6H7M13 6H33M39.5 6H54" stroke="#fcc53d" stroke-width="2.6" fill="none"/><circle cx="54" cy="6" r="5" fill="#fcc53d"/></svg>
<svg style="left:585px;top:899.3px" width="60" height="12"><path d="M0 6H7M13 6H33M39.5 6H54" stroke="#fcc53d" stroke-width="2.6" fill="none"/><circle cx="54" cy="6" r="5" fill="#fcc53d"/></svg>
<svg style="left:1285.3px;top:959.8px" width="59.700000000000045" height="12"><path d="M6 6H20M25.500 6H46.500M52 6H59.700000000000045" stroke="#fcc53d" stroke-width="2.6" fill="none"/><circle cx="6" cy="6" r="5" fill="#fcc53d"/></svg>
<div style="left:5.25px;top:589.75px;width:580.45px;height:42.14999999999998px;background:#fff3e1;border:3px solid #fcc53d;border-radius:10px;box-shadow:0 0 2.5px rgba(252,197,61,.9)"></div>
<span style="left:12.9px;top:597.5px;font-size:28px;line-height:28px;color:#000;">Select the argument type "Time series rolling"</span>
<div style="left:26.9px;top:557.75px;width:30px;height:36px;background:#fffefc;border:3px solid #fcc53d;border-radius:10px;box-shadow:0 0 2.5px rgba(252,197,61,.9)"></div>
<span style="left:33.5px;top:562.8px;font-size:28px;line-height:28px;color:#000;">4</span>
<div style="left:235.3px;top:686.3px;width:350.40000000000003px;height:41.5px;background:#fff3e1;border:3px solid #fcc53d;border-radius:10px;box-shadow:0 0 2.5px rgba(252,197,61,.9)"></div>
<span style="left:242.9px;top:693.7px;font-size:28px;line-height:28px;color:#000;">Specify the time series key</span>
<div style="left:256.7px;top:654.3px;width:30px;height:36px;background:#fffefc;border:3px solid #fcc53d;border-radius:10px;box-shadow:0 0 2.5px rgba(252,197,61,.9)"></div>
<span style="left:263.8px;top:658.3px;font-size:28px;line-height:28px;color:#000;">5</span>
<div style="left:107.5px;top:771.3px;width:478.20000000000005px;height:41.5px;background:#fff3e1;border:3px solid #fcc53d;border-radius:10px;box-shadow:0 0 2.5px rgba(252,197,61,.9)"></div>
<span style="left:115.19999999999999px;top:778.7px;font-size:28px;line-height:28px;color:#000;">Set the time period for data collection</span>
<div style="left:129.2px;top:739.3px;width:30px;height:36px;background:#fffefc;border:3px solid #fcc53d;border-radius:10px;box-shadow:0 0 2.5px rgba(252,197,61,.9)"></div>
<span style="left:135.29999999999998px;top:743.8px;font-size:28px;line-height:28px;color:#000;">6</span>
<div style="left:247.4px;top:873.3px;width:338.30000000000007px;height:76.30000000000007px;background:#fff3e1;border:3px solid #fcc53d;border-radius:10px;box-shadow:0 0 2.5px rgba(252,197,61,.9)"></div>
<span style="left:255.2px;top:880.7px;font-size:28px;line-height:28px;color:#000;">Set the maximum number</span>
<span style="left:255.2px;top:914.5px;font-size:28px;line-height:28px;color:#000;">of values to be processed</span>
<div style="left:269.3px;top:841.3px;width:30px;height:36px;background:#fffefc;border:3px solid #fcc53d;border-radius:10px;box-shadow:0 0 2.5px rgba(252,197,61,.9)"></div>
<span style="left:275.90000000000003px;top:844.8px;font-size:28px;line-height:28px;color:#000;">7</span>
<div style="left:1344.4px;top:948px;width:156.5999999999999px;height:41.200000000000045px;background:#fff3e1;border:3px solid #fcc53d;border-radius:10px;box-shadow:0 0 2.5px rgba(252,197,61,.9)"></div>
<span style="left:1352.3999999999999px;top:954.6px;font-size:28px;line-height:28px;color:#000;">Click "Add"</span>
<div style="left:1364px;top:916px;width:30px;height:36px;background:#fffefc;border:3px solid #fcc53d;border-radius:10px;box-shadow:0 0 2.5px rgba(252,197,61,.9)"></div>
<span style="left:1370.6999999999998px;top:919.3px;font-size:28px;line-height:28px;color:#000;">8</span>
</body></html>
